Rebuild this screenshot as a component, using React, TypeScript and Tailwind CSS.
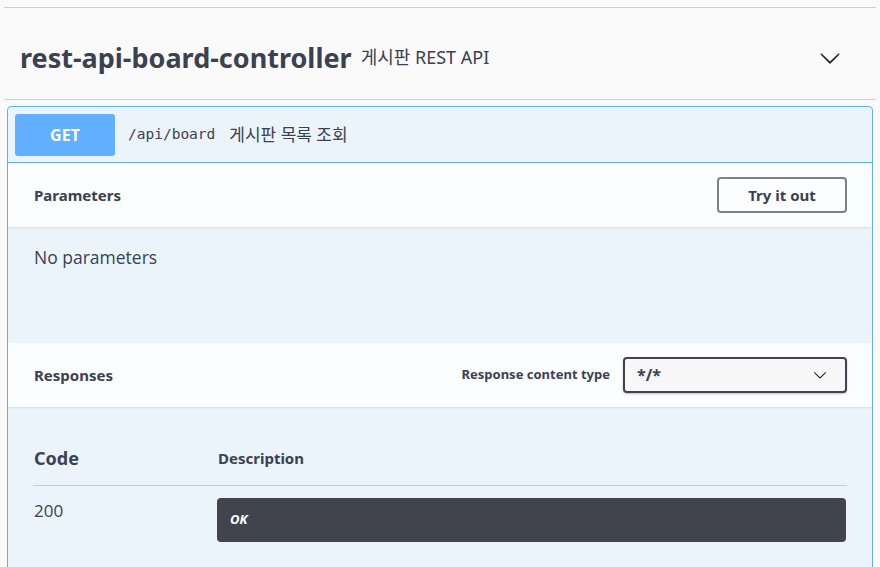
import React from 'react';

// Swagger-style operation panel: one tag heading and one expanded GET block.
const sans = "font-['Open_Sans','Noto_Sans_CJK_KR',sans-serif]";
const head = "font-['Noto_Sans','Noto_Sans_CJK_KR',sans-serif]";
const mono = "font-['DejaVu_Sans_Mono',monospace]";

function Chevron({ className }: { className?: string }) {
  return (
    <svg viewBox="0 0 20 20" className={className} fill="currentColor">
      <path d="M17.418 6.109c.272-.268.709-.268.979 0s.271.701 0 .969l-7.908 7.83c-.27.268-.707.268-.979 0l-7.908-7.83c-.27-.268-.27-.701 0-.969.271-.268.709-.268.979 0L10 13.25l7.418-7.141z" />
    </svg>
  );
}

export default function App() {
  return (
    <div className={`min-h-screen bg-[#fafafa] text-[#3b4151] px-[4px] ${sans}`}>
      <div className="h-[8px] border-b border-[#cdced1]" />
      <div className="h-[92px] flex items-center border-b border-[#cdced1] pl-[16px] pr-[35px] pt-[8px]">
        <h3 className={`${head} text-[27px] font-bold leading-[36px]`}>rest-api-board-controller</h3>
        <small className={`${head} ml-[9px] text-[18px] leading-[36px] mt-[-2px]`}>게시판 REST API</small>
        <Chevron className="ml-auto w-[22px] h-[22px] text-[#222]" />
      </div>

      <div className="mx-[3px] mt-[6px] border border-[#61affe] rounded-[4px] bg-[#ebf3fb] overflow-hidden">
        <div className="h-[56px] flex items-center px-[7px] border-b border-[#61affe]">
          <span className={`${head} w-[100px] h-[42px] rounded-[3px] bg-[#61affe] text-white font-bold text-[16px] flex items-center justify-center`}>
            GET
          </span>
          <span className={`${mono} ml-[13px] text-[14.5px] text-[#3b4151]`}>/api/board</span>
          <span className="ml-[14px] text-[17px] text-[#3b4151]">게시판 목록 조회</span>
        </div>

        <div className="h-[64px] flex items-center pl-[26px] pr-[25px] bg-[#fcfdff] shadow-[0_1px_2px_rgba(0,0,0,0.1)]">
          <h4 className={`${head} flex-1 text-[15px] font-bold`}>Parameters</h4>
          <button className={`${head} w-[130px] h-[36px] border-2 border-[#808080] rounded-[4px] bg-transparent text-[15px] font-bold`}>
            Try it out
          </button>
        </div>

        <div className="h-[116px] pl-[26px] pt-[17px]">
          <p className="text-[17.5px]">No parameters</p>
        </div>

        <div className="h-[64px] flex items-center pl-[26px] pr-[25px] bg-[#fcfdff] shadow-[0_1px_2px_rgba(0,0,0,0.1)]">
          <h4 className={`${head} flex-1 text-[15px] font-bold`}>Responses</h4>
          <label className={`${head} text-[13px] font-bold mr-[13px]`}>Response content type</label>
          <div className="w-[224px] h-[36px] border-2 border-[#41444e] rounded-[4px] bg-[#f7f7f7] shadow-[0_1px_2px_rgba(0,0,0,0.25)] flex items-center pl-[12px] pr-[18px]">
            <span className="flex-1 text-[16px] font-bold">*/*</span>
            <Chevron className="w-[14px] h-[14px] text-[#222]" />
          </div>
        </div>

        <div className="px-[25px] pt-[39px] pb-[40px]">
          <div className="flex items-end border-b border-[#c5cbd6] pb-[15px] px-[1px]">
            <span className={`${head} w-[184px] text-[18px] font-bold leading-[24px]`}>Code</span>
            <span className={`${head} text-[15px] font-bold leading-[22px] mb-[1px]`}>Description</span>
          </div>
          <div className="flex pt-[12px] px-[1px]">
            <span className="w-[183px] text-[17px] leading-[26px]">200</span>
            <div className="flex-1 h-[44px] rounded-[4px] bg-[#41444e] flex items-center pl-[13px]">
              <span className={`${head} text-white italic font-bold text-[13px]`}>OK</span>
            </div>
          </div>
        </div>
      </div>
    </div>
  );
}
